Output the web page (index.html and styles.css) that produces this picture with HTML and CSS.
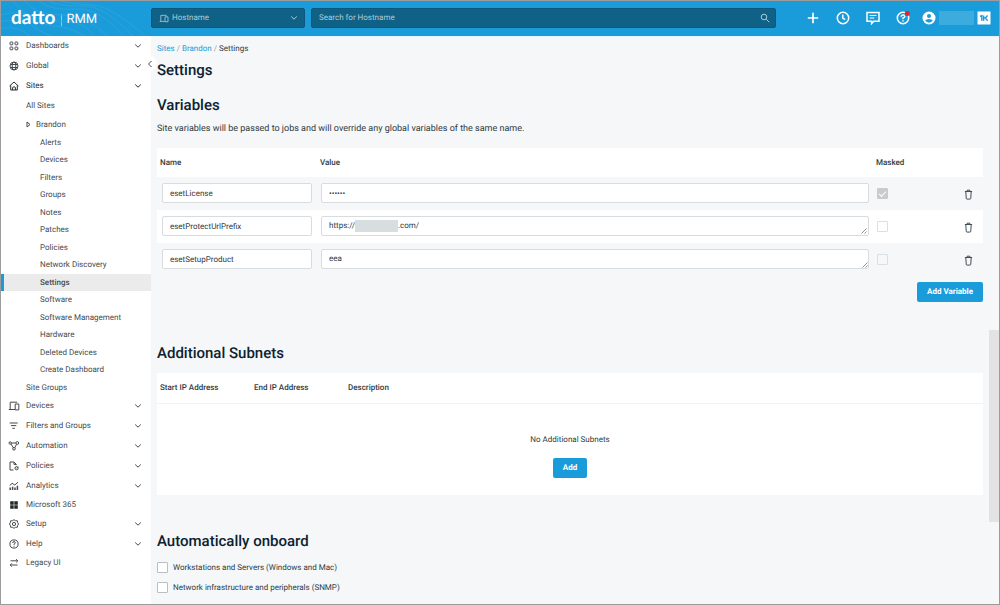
FILE: index.html
```html
<!DOCTYPE html>
<html lang="en">
<head>
<meta charset="utf-8">
<title>Settings - Datto RMM</title>
<link rel="stylesheet" href="styles.css">
</head>
<body>
<svg class="defs" aria-hidden="true">
  <symbol id="chev" viewBox="0 0 8 6"><path d="M1.200 1.500 4 4.200 6.800 1.500"/></symbol>
  <symbol id="devices" viewBox="0 0 12 10"><path d="M7 8.500H.8M2.200 8.300V1.200h7M7.200 3h3.600v5.900H7.200z"/></symbol>
  <symbol id="trash" viewBox="0 0 10 12"><path d="M1 2.700h8M3.500 2.500V1.200h3v1.300M2 3l.5 7.300q.1.800.9.800h3.200q.8 0 .9-.8L8 3"/></symbol>
</svg>
<div class="app">
  <header class="topbar">
    <a class="logo" href="#">
      <svg class="waves" viewBox="0 0 150 35" preserveAspectRatio="xMinYMin slice" aria-hidden="true"><path d="M38 0q12 10 36 8t48 27M48 0q14 6 34 5t50 30M58 0q16 3 34 4t52 31M0 14q20-6 30 2t24 9 30 10M0 20q22-2 30 4t20 11M0 27q20-2 28 8M24 0q10 14 36 14t46 21M12 0q14 20 44 20t36 15"/></svg>
      <span class="brand">datto</span><span class="bar"></span><span class="product">RMM</span>
    </a>
    <button class="scope" type="button"><svg class="ic"><use href="#devices"/></svg><span>Hostname</span><svg class="chev"><use href="#chev"/></svg></button>
    <label class="search"><input type="text" placeholder="Search for Hostname" aria-label="Search for Hostname"><svg class="lens" viewBox="0 0 10 10"><circle cx="4" cy="4" r="2.800"/><path d="m6.200 6.200 3 3"/></svg></label>
    <div class="actions">
      <button type="button" aria-label="Add"><svg viewBox="0 0 14 14"><path d="M7 1.800v10.400M1.800 7h10.400" stroke-width="1.700"/></svg></button>
      <button type="button" aria-label="Recent"><svg viewBox="0 0 14 14"><circle cx="7" cy="7" r="5.700"/><path d="M6.800 3.600V7l2.400 1.600"/></svg></button>
      <button type="button" aria-label="Messages"><svg viewBox="0 0 14 14"><path d="M1 1.500h12v8.700H7.700L5.600 12.600V10.200H1z"/><path d="M3.600 4.500h6.800M3.600 7h4.600" stroke-width="1.200"/></svg></button>
      <button type="button" aria-label="Help"><svg viewBox="0 0 14 14"><circle cx="7" cy="7" r="5.700"/><path d="M5.200 5.700q0-1.700 1.800-1.700t1.800 1.500Q8.800 6.500 7 7v1.200M7 9.300v1.300"/><circle class="dot" cx="11.300" cy="2.600" r="2.500"/></svg></button>
    </div>
    <button class="user" type="button" aria-label="Account"><svg viewBox="0 0 14 14"><circle class="w" cx="7" cy="7" r="6.500"/><circle class="b" cx="7" cy="5" r="2"/><path class="b" d="M3.200 9.600Q4 8 7 8t3.800 1.600Q9.500 11.700 7 11.700T3.200 9.600z"/></svg><span class="username"></span></button>
    <button class="kaseya" type="button" aria-label="Apps"><svg viewBox="0 0 14 14"><path class="w" d="M.5.500h13v13H.5z"/><path class="k" d="M3 5.400 4.800 4.600V9.800M6.600 4.400V9.800M7 7h1.300L10.600 4.500M8.300 7l2.400 2.700"/></svg></button>
  </header>
  <div class="body">
    <nav class="sidebar" aria-label="Main">
      <a class="item" href="#"><svg class="ic" viewBox="0 0 12 12"><rect x="2" y="2" width="2.800" height="2.800" rx=".7"/><rect x="7" y="2" width="2.800" height="2.800" rx=".7"/><rect x="2" y="7" width="2.800" height="2.800" rx=".7"/><rect x="7" y="7" width="2.800" height="2.800" rx=".7"/></svg><span>Dashboards</span><svg class="chev"><use href="#chev"/></svg></a>
      <a class="item" href="#"><svg class="ic" viewBox="0 0 12 12"><circle cx="6" cy="6" r="4"/><ellipse cx="6" cy="6" rx="1.800" ry="4"/><path d="M2 4.500h8M2 7.500h8"/></svg><span>Global</span><svg class="chev"><use href="#chev"/></svg></a>
      <a class="item open" href="#"><svg class="ic" viewBox="0 0 12 12"><path d="M1.600 6 6 2l4.400 4M2.700 5.300v4.700h6.600V5.300M4.600 10V7.400q1.400-1.300 2.800 0V10"/></svg><span>Sites</span><svg class="chev"><use href="#chev"/></svg></a>
      <a class="sub" href="#">All Sites</a>
      <a class="sub site" href="#"><svg class="tri" viewBox="0 0 5 7"><path d="M1 1v5l3-2.500z"/></svg>Brandon</a>
      <div class="leaves">
        <a href="#">Alerts</a><a href="#">Devices</a><a href="#">Filters</a><a href="#">Groups</a><a href="#">Notes</a><a href="#">Patches</a><a href="#">Policies</a><a href="#">Network Discovery</a><a class="current" href="#" aria-current="page">Settings</a><a href="#">Software</a><a href="#">Software Management</a><a href="#">Hardware</a><a href="#">Deleted Devices</a><a href="#">Create Dashboard</a>
      </div>
      <a class="sub groups" href="#">Site Groups</a>
      <a class="item" href="#"><svg class="ic"><use href="#devices"/></svg><span>Devices</span><svg class="chev"><use href="#chev"/></svg></a>
      <a class="item" href="#"><svg class="ic" viewBox="0 0 12 12"><path d="M1.700 3h8M3 5.600h5.300M4.400 8.300h2.500"/></svg><span>Filters and Groups</span><svg class="chev"><use href="#chev"/></svg></a>
      <a class="item" href="#"><svg class="ic" viewBox="0 0 12 12"><path d="M3.300 3h4.500M3 4l2.500 4M8.500 4.200 6.800 7.800"/><circle cx="2.200" cy="3" r="1.200"/><circle cx="9.300" cy="3" r="1.400"/><circle cx="6" cy="8.800" r="1.300"/></svg><span>Automation</span><svg class="chev"><use href="#chev"/></svg></a>
      <a class="item" href="#"><svg class="ic" viewBox="0 0 12 12"><path d="M5.500 10H2V2h4l2.200 2.200v1M6 2.200v2.200h2.200"/><circle cx="8.600" cy="8.200" r="1.600"/><path d="M8.600 8.200 10.200 7"/></svg><span>Policies</span><svg class="chev"><use href="#chev"/></svg></a>
      <a class="item" href="#"><svg class="ic" viewBox="0 0 12 12"><path d="M2.200 10V7.500M4.600 10V6.700M7 10V7.400M9.400 10V5.700" stroke-width="1.500"/><path d="M1.700 5.500 4.200 3.300l2.600 1.700L10 2.200"/></svg><span>Analytics</span><svg class="chev"><use href="#chev"/></svg></a>
      <a class="item short" href="#"><svg class="ic solid" viewBox="0 0 12 12"><path d="M2.200 2.200h3.500v3.500H2.200zM6.300 2.200h3.500v3.500H6.300zM2.200 6.300h3.500v3.500H2.200zM6.300 6.300h3.500v3.500H6.300z"/></svg><span>Microsoft 365</span></a>
      <a class="item" href="#"><svg class="ic" viewBox="0 0 12 12"><path d="m6 1.700 1.500 1 1.900.1.300 1.800L10.500 6l-.8 1.400-.3 1.800-1.900.1-1.500 1-1.500-1-1.900-.1-.3-1.800L1.500 6l.8-1.400.3-1.800 1.900-.1z"/><circle cx="6" cy="6" r="1.600"/></svg><span>Setup</span><svg class="chev"><use href="#chev"/></svg></a>
      <a class="item" href="#"><svg class="ic" viewBox="0 0 12 12"><circle cx="6" cy="6" r="4.100"/><path d="M4.700 5q0-1.400 1.300-1.400T7.300 4.800Q7.300 5.600 6 6.200v.7M6 7.800v.9"/></svg><span>Help</span><svg class="chev"><use href="#chev"/></svg></a>
      <a class="item short" href="#"><svg class="ic" viewBox="0 0 12 12"><path d="M2.500 3.800h7.300M8.200 2.200l1.600 1.600-1.600 1.600M9.500 8H2.200M3.800 6.400 2.200 8l1.600 1.600"/></svg><span>Legacy UI</span></a>
      <button class="collapse" type="button" aria-label="Collapse menu"><svg viewBox="0 0 6 8"><path d="M4.500 1 1.500 4l3 3"/></svg></button>
    </nav>
    <main class="content">
      <nav class="crumbs" aria-label="Breadcrumb"><a href="#">Sites</a> <i>/</i> <a href="#">Brandon</a> <i>/</i> <span>Settings</span></nav>
      <h1>Settings</h1>
      <section>
        <h2>Variables</h2>
        <p class="lead">Site variables will be passed to jobs and will override any global variables of the same name.</p>
        <table class="vars">
          <thead><tr><th class="c-name">Name</th><th>Value</th><th class="c-mask">Masked</th><th class="c-del"></th></tr></thead>
          <tbody>
            <tr><td><input class="field" type="text" value="esetLicense" aria-label="Name"></td><td><input class="field" type="password" value="secret" aria-label="Value"></td><td><input class="check" type="checkbox" checked disabled aria-label="Masked"></td><td><button class="del" type="button" aria-label="Delete"><svg><use href="#trash"/></svg></button></td></tr>
            <tr><td><input class="field" type="text" value="esetProtectUrlPrefix" aria-label="Name"></td><td><div class="field area" role="textbox" aria-label="Value">https://<span class="redacted"></span>.com/<svg class="grip" viewBox="0 0 6 6"><path d="M.5 5.500l5-5M3.500 5.500l2-2"/></svg></div></td><td><input class="check" type="checkbox" disabled aria-label="Masked"></td><td><button class="del" type="button" aria-label="Delete"><svg><use href="#trash"/></svg></button></td></tr>
            <tr><td><input class="field" type="text" value="esetSetupProduct" aria-label="Name"></td><td><div class="area"><textarea class="field" rows="1" aria-label="Value">eea</textarea><svg class="grip" viewBox="0 0 6 6"><path d="M.5 5.500l5-5M3.500 5.500l2-2"/></svg></div></td><td><input class="check" type="checkbox" disabled aria-label="Masked"></td><td><button class="del" type="button" aria-label="Delete"><svg><use href="#trash"/></svg></button></td></tr>
          </tbody>
        </table>
        <div class="end"><button class="btn" type="button">Add Variable</button></div>
      </section>
      <section class="subnets">
        <h2>Additional Subnets</h2>
        <div class="panel">
          <table><thead><tr><th class="c-ip">Start IP Address</th><th class="c-ip">End IP Address</th><th>Description</th></tr></thead></table>
          <div class="empty"><p>No Additional Subnets</p><button class="btn" type="button">Add</button></div>
        </div>
      </section>
      <section class="onboard">
        <h2>Automatically onboard</h2>
        <label><input class="check" type="checkbox">Workstations and Servers (Windows and Mac)</label>
        <label><input class="check" type="checkbox">Network infrastructure and peripherals (SNMP)</label>
      </section>
      <div class="thumb"></div>
    </main>
  </div>
</div>
</body>
</html>
```
FILE: styles.css
```css
* { box-sizing: border-box; }
body { margin: 0; font: 8px/12px Roboto, "Liberation Sans", sans-serif; color: #2f3b42; background: #f5f7f9; text-rendering: geometricPrecision; }
button, input, textarea { font: inherit; color: inherit; text-rendering: inherit; }
button { border: 0; padding: 0; background: none; cursor: pointer; }
a { color: inherit; text-decoration: none; }
h1, h2, p { margin: 0; }
svg { fill: none; stroke: currentColor; display: block; flex: none; }
.defs { position: absolute; width: 0; height: 0; }
.app { min-height: 100vh; border: 1px solid #9c9c9c; display: flex; flex-direction: column; }

.topbar { height: 35px; background: #1b9cda; color: #fff; display: flex; align-items: center; padding: 0 8px 1px 0; }
.logo { position: relative; width: 150px; height: 34px; flex: none; display: flex; align-items: center; padding-left: 10px; }
.waves { position: absolute; inset: 0; width: 150px; height: 35px; stroke: #2ba3dc; stroke-width: 1; }
.brand { position: relative; font: 700 19px/24px Lato, sans-serif; }
.bar { width: 1px; height: 12px; background: #8dcdec; margin: 4px 5px 0 5px; }
.product { position: relative; font-size: 13px; line-height: 16px; margin-top: 4px; }
.scope { width: 154px; flex: none; height: 20px; border-radius: 2px; background: #106186; border: 1px solid #0f567a; color: #a9cbd9; display: flex; align-items: center; padding: 0 6px 0 7px; margin-right: 6px; }
.scope .ic { width: 10px; height: 9px; margin-right: 3px; }
.scope .chev { margin-left: auto; }
.chev { width: 8px; height: 6px; }
.search { flex: 1; display: flex; align-items: center; height: 20px; border-radius: 2px; background: #106186; border: 1px solid #0f567a; color: #a9cbd9; padding: 0 5px 0 7px; }
.search input { flex: 1; min-width: 0; background: none; border: 0; padding: 0; outline: 0; }
.search input::placeholder { color: #a9cbd9; opacity: 1; }
.lens { width: 10px; height: 10px; }
.actions { display: flex; gap: 16px; margin: 0 12px 0 30px; }
.actions svg, .user svg, .kaseya svg { width: 14px; height: 14px; stroke-width: 1.5; }
.dot { fill: #e0262d; stroke: none; }
.w { fill: #fff; stroke: none; }
.b { fill: #1b9cda; stroke: none; }
.kaseya .k { stroke: #1b9cda; stroke-width: 1.4; }
.user { display: flex; align-items: center; gap: 3px; margin-right: 3px; }
.username { width: 35px; height: 14px; background: #3cacdf; }

.body { flex: 1; display: flex; }
.sidebar { position: relative; width: 150px; flex: none; background: #fff; color: #444b50; }
.item { display: flex; align-items: center; height: 20px; padding: 0 9px 0 7px; }
.item.short { height: 18px; }
.item .ic { width: 12px; height: 12px; margin-right: 6px; }
.item .chev { margin-left: auto; }
.item .solid { fill: #23282b; stroke: none; }
.open { color: #262c30; }
.sub { display: flex; align-items: center; height: 19px; padding-left: 25px; }
.groups { height: 17px; }
.tri { width: 5px; height: 7px; margin-right: 5px; }
.leaves { display: grid; grid-auto-rows: 17px 18px; }
.leaves a { display: flex; align-items: center; padding-left: 39px; }
.leaves .current { background: #ebebeb; border-left: 3px solid #1b9cda; padding-left: 36px; font-weight: 500; }
.collapse { position: absolute; z-index: 1; right: -6px; top: 20px; width: 15px; height: 15px; border-radius: 50%; background: #fff; display: flex; align-items: center; justify-content: center; }
.collapse svg { width: 6px; height: 8px; }

.content { position: relative; flex: 1; min-width: 0; padding: 6px 16px 4px 6px; border-top: 1px solid #e4f2fa; }
.thumb { position: absolute; right: 0; top: 293px; width: 10px; height: 192px; background: #e3e3e3; }
.crumbs a { color: #1b9cda; }
.crumbs i { color: #9ba3a8; font-style: normal; }
h1, h2 { font-size: 15px; line-height: 20px; font-weight: 500; color: #0b2230; }
h1 { margin: 5px 0 15px; }
.lead { font-size: 9px; margin: 8px 0 13px; }
table { width: 100%; border-collapse: collapse; table-layout: fixed; }
th { text-align: left; font-weight: 500; padding: 0 3px; height: 29px; }
.vars thead { background: #fff; }
.vars tbody tr:nth-child(even) { background: #fff; }
.vars td { height: 33px; padding: 0 5px 1px; vertical-align: middle; }
.vars td + td { padding: 0 4px 1px; }
.c-name { width: 160px; }
.c-mask { width: 87px; }
.c-del { width: 23px; }
.field { display: block; width: 100%; height: 20px; border: 1px solid #d9dcde; border-radius: 2px; background: #fff; padding: 0 7px; outline: 0; }
textarea.field { resize: none; padding: 3px 7px; overflow: hidden; }
.area { position: relative; }
.area.field { display: flex; align-items: center; }
.grip { position: absolute; right: 1px; bottom: 1px; width: 6px; height: 6px; stroke: #8c9296; }
.redacted { width: 43px; height: 12px; background: #d8dedf; }
.check { appearance: none; width: 11px; height: 11px; margin: 0; border: 1px solid #b9bec1; border-radius: 1px; background: #fff; display: block; flex: none; }
.check:disabled { border-color: #dcdfe1; background: transparent; }
.check:disabled:checked { background: #c9cbcc; border-color: #c9cbcc; }
.check:checked::after { content: ""; display: block; width: 6px; height: 3px; margin: 2px 0 0 1px; border: solid #fff; border-width: 0 0 1px 1px; transform: rotate(-45deg); }
.del { display: block; padding-top: 2px; }
.del svg { width: 9px; height: 11px; }
.end { display: flex; justify-content: flex-end; padding-top: 6px; }
.btn { height: 20px; border-radius: 2px; background: #1b9cda; color: #fff; font-weight: 700; padding: 0 10px; }
.subnets { margin-top: 41px; }
.panel { margin-top: 10px; background: #fff; }
.panel table { border-bottom: 1px solid #f0f2f4; }
.c-ip { width: 94px; }
.panel th { height: 30px; }
.empty { display: flex; flex-direction: column; align-items: center; gap: 12px; padding: 30px 0 17px; }
.onboard { margin-top: 36px; }
.onboard label { display: flex; align-items: center; gap: 5px; height: 20px; }
.onboard h2 { margin-bottom: 7px; }
```
